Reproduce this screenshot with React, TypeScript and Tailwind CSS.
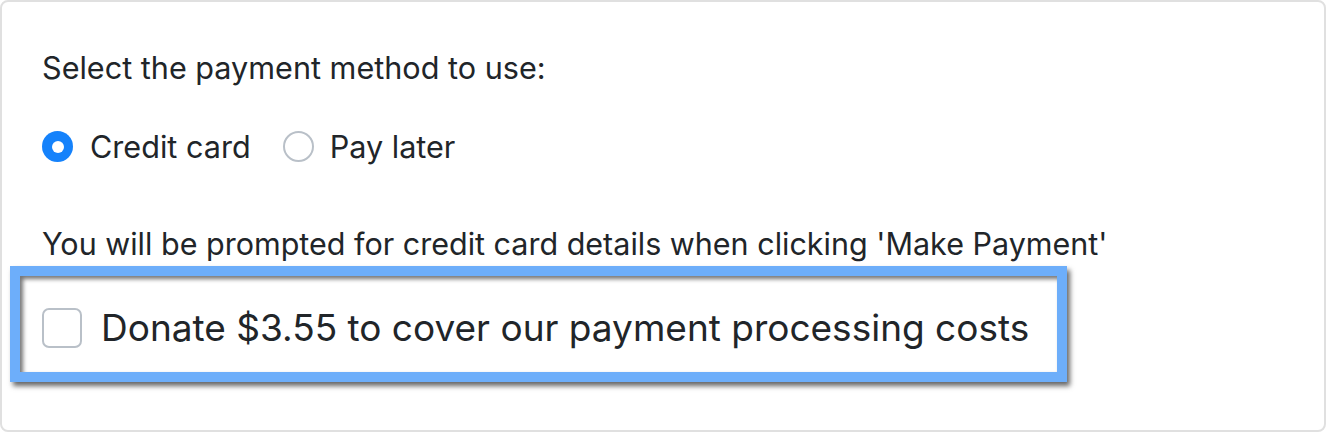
export default function App() {
  return (
    <div
      className="w-[1326px] h-[432px] bg-white text-[#212529]"
      style={{ fontFamily: 'Inter, "Noto Sans", sans-serif' }}
    >
      <div className="h-full rounded-[8px] border-2 border-[#e0e0e0] px-[40px] pt-[43px]">
        <p className="text-[30.6px] leading-[45px]">Select the payment method to use:</p>

        <div className="mt-[34px] flex items-center text-[30.6px] leading-[45px]">
          <label className="flex items-center">
            <span className="flex h-[31px] w-[31px] items-center justify-center rounded-full bg-[#1582fb]">
              <span className="h-[12px] w-[12px] rounded-full bg-white" />
            </span>
            <span className="ml-[17px]">Credit card</span>
          </label>
          <label className="ml-[32px] flex items-center">
            <span className="h-[31px] w-[31px] rounded-full border-2 border-[#b9c0c8] bg-white" />
            <span className="ml-[16px]">Pay later</span>
          </label>
        </div>

        <p className="mt-[52px] text-[30.5px] leading-[45px]">
          You will be prompted for credit card details when clicking 'Make Payment'
        </p>

        <div className="-ml-[32px] mt-0 w-[1057px] border-[10px] border-[#6daefa] pl-[22px] pt-[28px] pb-[20px] shadow-[3px_4px_5px_rgba(0,0,0,0.6),inset_3px_3px_4px_rgba(0,0,0,0.55)]">
          <label className="flex items-center">
            <span className="h-[40px] w-[40px] shrink-0 rounded-[7px] border-2 border-[#b9c0c8] bg-white" />
            <span className="ml-[19px] text-[37px] leading-[48px]">
              Donate $3.55 to cover our payment processing costs
            </span>
          </label>
        </div>
      </div>
    </div>
  );
}
